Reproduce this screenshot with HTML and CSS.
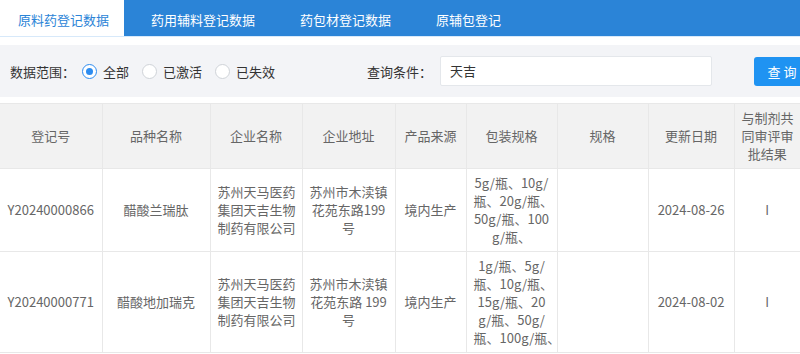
FILE: index.html
```html
<!DOCTYPE html>
<html lang="zh-CN">
<head>
<meta charset="utf-8">
<link rel="stylesheet" href="styles.css">
</head>
<body>
<div class="page">
  <div class="tabs">
    <div class="tab active">原料药登记数据</div>
    <div class="tab">药用辅料登记数据</div>
    <div class="tab">药包材登记数据</div>
    <div class="tab">原辅包登记</div>
  </div>
  <div class="filter">
    <span class="label">数据范围：</span>
    <label class="radio checked"><span class="dot"></span>全部</label>
    <label class="radio"><span class="dot"></span>已激活</label>
    <label class="radio"><span class="dot"></span>已失效</label>
    <span class="label query-label">查询条件：</span>
    <div class="input">天吉</div>
    <button class="btn">查 询</button>
  </div>
  <table class="grid">
    <colgroup>
      <col class="c1"><col class="c2"><col class="c3"><col class="c4"><col class="c5"><col class="c6"><col class="c7"><col class="c8"><col class="c9">
    </colgroup>
    <thead>
      <tr class="head">
        <th>登记号</th>
        <th>品种名称</th>
        <th>企业名称</th>
        <th>企业地址</th>
        <th>产品来源</th>
        <th>包装规格</th>
        <th>规格</th>
        <th>更新日期</th>
        <th>与制剂共<br>同审评审<br>批结果</th>
      </tr>
    </thead>
    <tbody>
      <tr class="row1">
        <td>Y20240000866</td>
        <td>醋酸兰瑞肽</td>
        <td>苏州天马医药<br>集团天吉生物<br>制药有限公司</td>
        <td>苏州市木渎镇<br>花苑东路199<br>号</td>
        <td>境内生产</td>
        <td>5g/瓶、10g/<br>瓶、20g/瓶、<br>50g/瓶、100<br>g/瓶、</td>
        <td></td>
        <td>2024-08-26</td>
        <td>I</td>
      </tr>
      <tr class="row2">
        <td>Y20240000771</td>
        <td>醋酸地加瑞克</td>
        <td>苏州天马医药<br>集团天吉生物<br>制药有限公司</td>
        <td>苏州市木渎镇<br>花苑东路 199<br>号</td>
        <td>境内生产</td>
        <td>1g/瓶、5g/<br>瓶、10g/瓶、<br>15g/瓶、20<br>g/瓶、50g/<br>瓶、100g/瓶、</td>
        <td></td>
        <td>2024-08-02</td>
        <td>I</td>
      </tr>
    </tbody>
  </table>
</div>
</body>
</html>
```

FILE: styles.css
```css
html, body {
  margin: 0;
  padding: 0;
  background: #fff;
}
body {
  width: 800px;
  height: 354px;
  overflow: hidden;
  font-family: "Noto Sans CJK SC", "Microsoft YaHei", sans-serif;
  font-size: 13px;
  color: #333;
}
.page {
  width: 800px;
}
.tabs {
  height: 36px;
  background: #2b84d7;
  display: flex;
  gap: 9px;
  border-bottom: 1px solid #d7e9fa;
}
.tab {
  padding: 0 18px;
  line-height: 39px;
  color: #fff;
  white-space: nowrap;
}
.tab.active {
  background: #fff;
  color: #2b84d7;
  width: 88px;
}
.filter {
  margin-top: 8px;
  height: 52px;
  background: #f3f4f7;
  display: flex;
  align-items: center;
  padding-left: 10px;
  white-space: nowrap;
}
.filter > * {
  flex: none;
}
.label {
  color: #333;
}
.radio {
  display: flex;
  align-items: center;
  gap: 6px;
  margin-left: 7px;
  margin-right: 6px;
  color: #333;
}
.dot {
  box-sizing: border-box;
  width: 15px;
  height: 15px;
  border-radius: 50%;
  border: 1px solid #cfd3d8;
  background: #fff;
  position: relative;
}
.radio.checked .dot {
  border-color: #2d8cf0;
}
.radio.checked .dot::after {
  content: "";
  position: absolute;
  left: 3px;
  top: 3px;
  width: 7px;
  height: 7px;
  border-radius: 50%;
  background: #2d8cf0;
}
.query-label {
  margin-left: 86px;
}
.input {
  box-sizing: border-box;
  margin-left: 8px;
  width: 272px;
  height: 30px;
  background: #fff;
  border: 1px solid #e4e7eb;
  border-radius: 2px;
  line-height: 28px;
  padding-left: 9px;
  color: #333;
}
.btn {
  margin-left: 42px;
  width: 56px;
  height: 29px;
  border: none;
  border-radius: 3px;
  background: #1f93f2;
  color: #fff;
  font-family: inherit;
  font-size: 13px;
  padding: 0;
}
.grid {
  margin-top: 6px;
  width: 800px;
  table-layout: fixed;
  border-collapse: collapse;
  color: #666;
}
.c1 { width: 102px; }
.c2 { width: 108px; }
.c3 { width: 92px; }
.c4 { width: 93px; }
.c5 { width: 71px; }
.c6 { width: 91px; }
.c7 { width: 91px; }
.c8 { width: 86px; }
.c9 { width: 66px; }
.grid th,
.grid td {
  border: 1px solid #e8e8e8;
  padding: 5px 7px;
  line-height: 18px;
  text-align: center;
  vertical-align: middle;
  font-weight: normal;
  overflow: hidden;
  white-space: nowrap;
}
.grid th:first-child,
.grid td:first-child {
  border-left: none;
}
.grid th:last-child,
.grid td:last-child {
  border-right: none;
}
.head th {
  background: #f2f2f2;
  height: 54px;
  color: #666;
}
.row1 td {
  height: 72px;
}
.row2 td {
  height: 88px;
}
```
